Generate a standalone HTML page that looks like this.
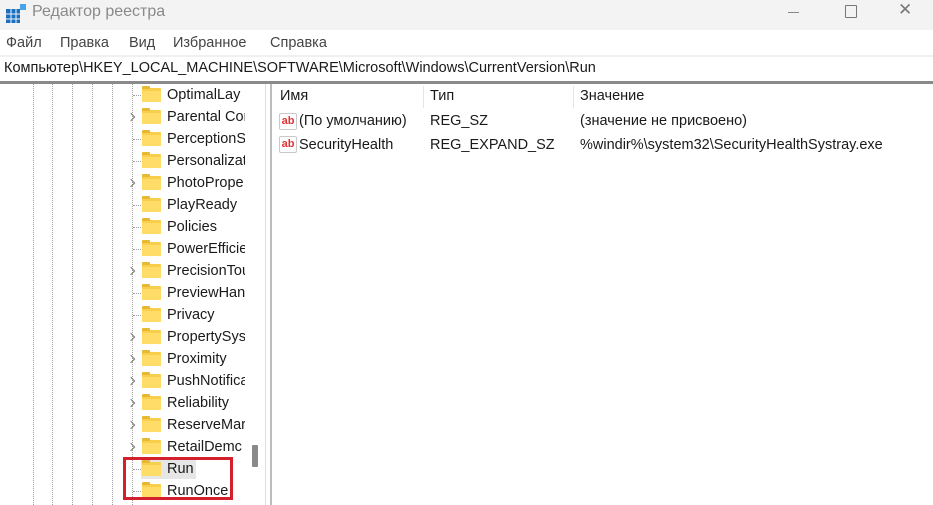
<!DOCTYPE html><html><head><meta charset="utf-8"><style>
body{margin:0;width:933px;height:505px;overflow:hidden;background:#fff;font-family:"Segoe UI","Liberation Sans","DejaVu Sans",sans-serif;color:#1a1a1a;position:relative}
.a{position:absolute;white-space:nowrap}
.vl{position:absolute;top:84px;height:421px;border-left:1px dotted #a0a0a0}
.row{position:absolute;left:120px;height:22px;font-size:14.5px;line-height:22px;white-space:nowrap;z-index:2}
.fold{position:absolute;left:22px;top:4px;width:19px;height:14px;background:#f8cf4c;border-radius:1px}
.fold:before{content:"";position:absolute;left:0;top:-2px;width:8px;height:3px;background:#e8b830;border-radius:1px 1px 0 0}
.fold:after{content:"";position:absolute;left:0;top:3px;width:19px;height:11px;background:#ffdc68}
.chev{position:absolute;left:8px;top:8px;width:5px;height:5px;border-right:1.3px solid #777;border-top:1.3px solid #777;transform:rotate(45deg)}
.txt{position:absolute;left:47px;width:78px;overflow:hidden;white-space:nowrap}
.ab{position:absolute;width:18px;height:17px;border:1px solid #c9c9c9;background:#fff;font-size:11px;font-weight:bold;color:#d33;line-height:14px;text-align:center;border-radius:2px;box-sizing:border-box}
.m{position:absolute;top:35px;font-size:14.5px;color:#444}
</style></head><body>
<div class="a" style="left:0;top:0;width:933px;height:30px;background:#f3f3f3"></div>
<svg class="a" style="left:6px;top:4px" width="20" height="20"><rect x="0" y="5" width="14" height="14" fill="#1a6fc0"/><g stroke="#f3f3f3" stroke-width="1"><line x1="0" y1="10" x2="14" y2="10"/><line x1="0" y1="15" x2="14" y2="15"/><line x1="5" y1="5" x2="5" y2="19"/><line x1="10" y1="5" x2="10" y2="19"/></g><rect x="14" y="0" width="6" height="6" fill="#4aa3e8"/></svg>
<div class="a" style="left:32px;top:3px;font-size:16px;color:#8a8a8a">Редактор реестра</div>
<div class="a" style="left:788px;top:12px;width:11px;border-top:1px solid #888"></div>
<div class="a" style="left:845px;top:5px;width:10px;height:11px;border:1px solid #777;border-radius:1px"></div>
<div class="a" style="left:898px;top:0px;font-size:17px;color:#777">✕</div>
<div class="m" style="left:6px">Файл</div><div class="m" style="left:60px">Правка</div><div class="m" style="left:129px">Вид</div><div class="m" style="left:173px">Избранное</div><div class="m" style="left:270px">Справка</div>
<div class="a" style="left:0;top:55px;width:933px;height:2px;background:#f0f0f0"></div>
<div class="a" style="left:4px;top:60px;font-size:14.5px">Компьютер\HKEY_LOCAL_MACHINE\SOFTWARE\Microsoft\Windows\CurrentVersion\Run</div>
<div class="a" style="left:0;top:81px;width:933px;height:3px;background:#8a8a8a"></div>
<div class="vl" style="left:33px"></div><div class="vl" style="left:52px"></div><div class="vl" style="left:72px"></div><div class="vl" style="left:92px"></div><div class="vl" style="left:112px"></div><div class="vl" style="left:132px"></div>
<div class="a" style="left:265px;top:84px;width:1px;height:421px;background:#ddd"></div>
<div class="a" style="left:270px;top:84px;width:2px;height:421px;background:#bdbdbd"></div>
<div class="a" style="left:252px;top:445px;width:6px;height:22px;background:#8a8a8a;border-radius:1px"></div>
<div class="a" style="left:141px;top:459px;width:55px;height:20px;background:#e6e6e6;z-index:1"></div>
<div id="tree"></div>
<div class="a" style="left:280px;top:88px;font-size:14.5px">Имя</div>
<div class="a" style="left:423px;top:86px;width:1px;height:22px;background:#e5e5e5"></div>
<div class="a" style="left:430px;top:88px;font-size:14.5px">Тип</div>
<div class="a" style="left:573px;top:86px;width:1px;height:22px;background:#e5e5e5"></div>
<div class="a" style="left:580px;top:88px;font-size:14.5px">Значение</div>
<div class="ab" style="left:279px;top:113px">ab</div>
<div class="a" style="left:299px;top:113px;font-size:14.5px">(По умолчанию)</div>
<div class="a" style="left:430px;top:113px;font-size:14.5px">REG_SZ</div>
<div class="a" style="left:580px;top:113px;font-size:14.5px">(значение не присвоено)</div>
<div class="ab" style="left:279px;top:136px">ab</div>
<div class="a" style="left:299px;top:137px;font-size:14.5px">SecurityHealth</div>
<div class="a" style="left:430px;top:137px;font-size:14.5px">REG_EXPAND_SZ</div>
<div class="a" style="left:580px;top:137px;font-size:14.5px">%windir%\system32\SecurityHealthSystray.exe</div>
<div class="a" style="left:123px;top:457px;width:110px;height:43px;border:3px solid #d4202c;box-sizing:border-box;z-index:3"></div>
<script>
var items=[["OptimalLay",0],["Parental Cor",1],["PerceptionS",0],["Personalizat",0],["PhotoPrope",1],["PlayReady",0],["Policies",0],["PowerEfficie",0],["PrecisionTou",1],["PreviewHan",0],["Privacy",0],["PropertySys",1],["Proximity",1],["PushNotifica",1],["Reliability",1],["ReserveMar",1],["RetailDemc",1],["Run",0],["RunOnce",0]];
var h="";items.forEach(function(it,i){var y=84+i*22;h+='<div class="row" style="top:'+y+'px">'+(it[1]?'<span class="chev"></span>':'<span style="position:absolute;left:13px;top:11px;width:8px;border-top:1px dotted #a0a0a0"></span>')+'<span class="fold"></span><span class="txt">'+it[0]+'</span></div>';});
document.getElementById("tree").innerHTML=h;
</script>
</body></html>
